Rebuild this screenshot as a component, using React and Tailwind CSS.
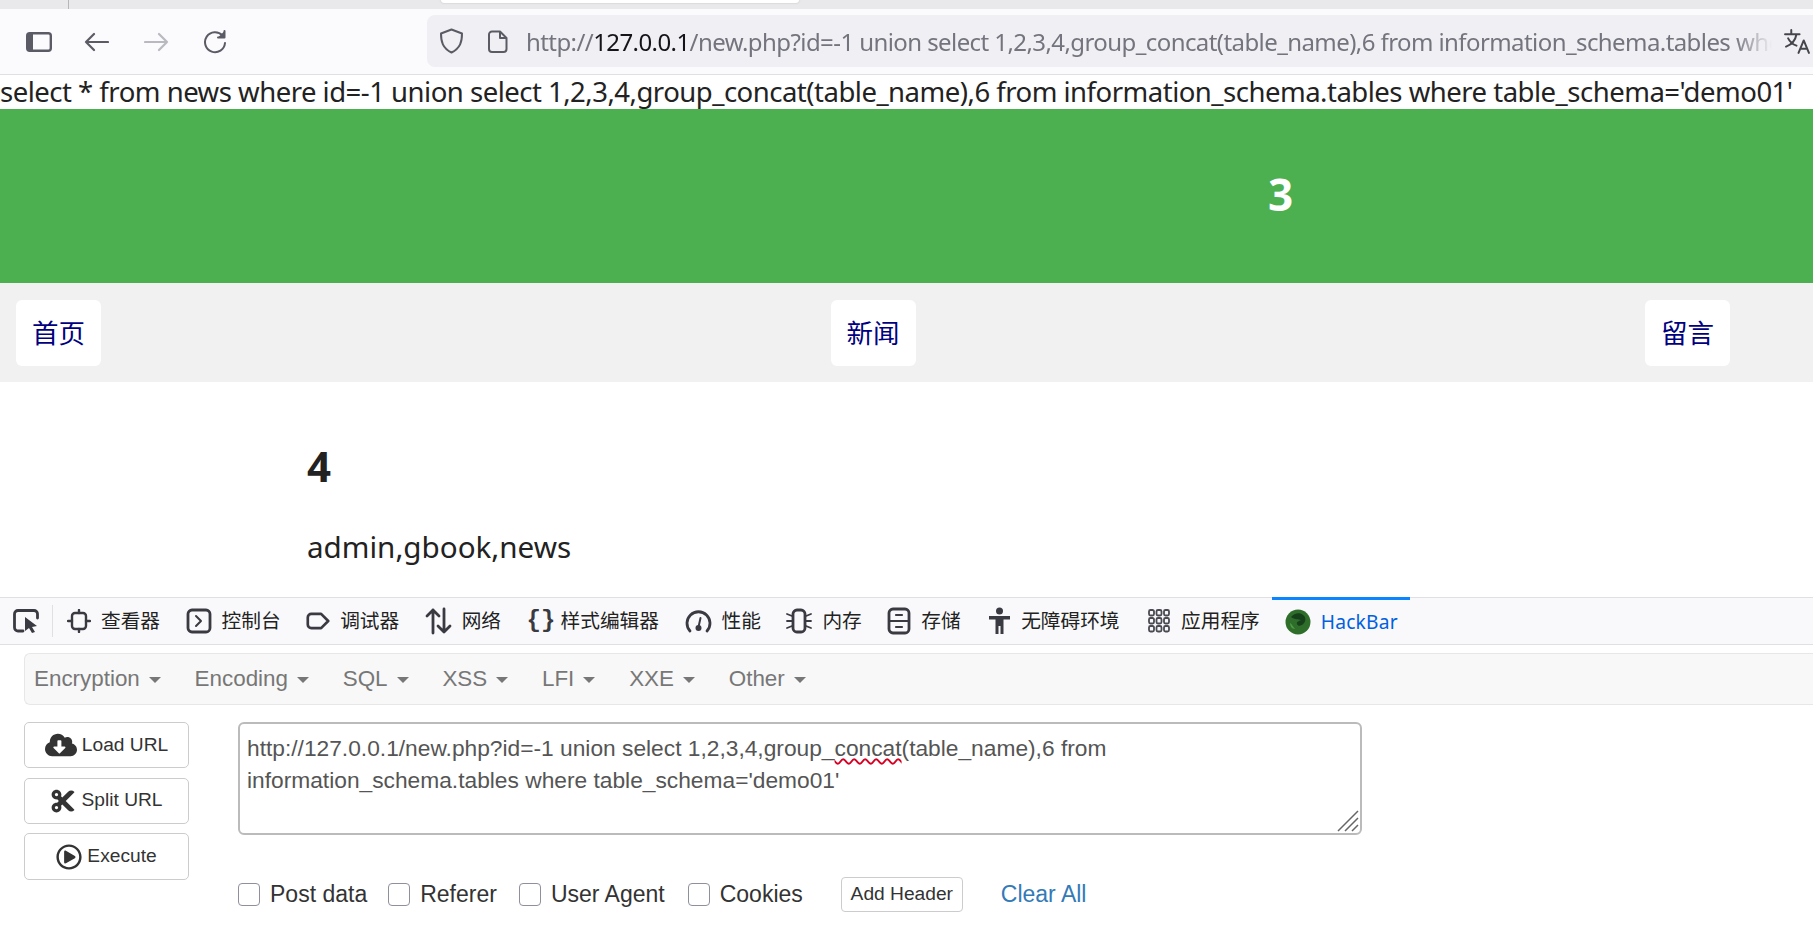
import React from "react";
import { FaCloudDownloadAlt, FaCut, FaRegPlayCircle } from "react-icons/fa";

const Ic = ({ w = 26, h = 26, vb = "0 0 26 26", children, className = "" }) => (
  <svg width={w} height={h} viewBox={vb} fill="none" stroke="#3a3a42" strokeWidth="2.4" strokeLinecap="round" strokeLinejoin="round" className={`shrink-0 ${className}`}>
    {children}
  </svg>
);

const tabs = [
  ["查看器", <Ic w={24} h={24} vb="0 0 24 24"><rect x="5" y="4" width="14" height="16" rx="3" /><path d="M1 12h4M19 12h4M12 1v3M12 20v3" /></Ic>],
  ["控制台", <Ic><rect x="2" y="2" width="22" height="22" rx="4" strokeWidth="2.8" /><path d="M10 8l5 5-5 5" strokeWidth="2" /></Ic>],
  ["调试器", <Ic w={24} h={22} vb="0 0 27 24"><path d="M6 4h11l8 8-8 8H6a4 4 0 0 1-4-4V8a4 4 0 0 1 4-4z" strokeWidth="3" /></Ic>],
  ["网络", <Ic w={27} h={28} vb="0 0 27 28"><path d="M8 26V3M2 9l6-6 6 6M19 2v23M13 19l6 6 6-6" strokeWidth="2.8" /></Ic>],
  ["样式编辑器", <span className="w-[24px] text-center text-[24px] leading-none font-bold text-[#3a3a42] font-['Liberation_Mono',monospace]">{"{}"}</span>],
  ["性能", <Ic w={27} h={26} vb="0 0 27 26"><path d="M5 23A11.5 11.5 0 1 1 22 23" strokeWidth="2.8" /><path d="M13.5 19l2-9" strokeWidth="2" /><circle cx="13.5" cy="20" r="3" fill="#3a3a42" stroke="none" /></Ic>],
  ["内存", <Ic w={26} h={26} vb="0 0 26 26"><rect x="7" y="2" width="12" height="22" rx="4" strokeWidth="2.8" /><path d="M1 6l5 2M1 13h5M1 20l5-2M20 8l5-2M20 13h5M20 18l5 2" strokeWidth="1.8" /></Ic>],
  ["存储", <Ic w={24} h={28} vb="0 0 24 28"><rect x="2" y="2" width="20" height="24" rx="4" strokeWidth="2.8" /><path d="M3 14h18M9 8h6M9 20h6" strokeWidth="2.2" /></Ic>],
  ["无障碍环境", <svg width="23" height="28" viewBox="0 0 23 28" className="shrink-0 ml-[2px]" fill="#3a3a42"><circle cx="11.5" cy="4" r="3.5" /><path d="M1 9h21v3.5h-6.5V27h-3v-8h-2v8h-3V12.500H1z" /></svg>],
  ["应用程序", <svg width="24" height="26" viewBox="0 0 24 26" className="shrink-0 ml-[2px]" fill="none" stroke="#4a4a52" strokeWidth="1.8">{[2, 9.500, 17].map((x) => [2, 10, 18].map((y) => <rect key={`${x}-${y}`} x={x} y={y} width="5" height="5.500" rx="1.500" />))}</svg>],
];

const NavItem = ({ children }) => (
  <div className="flex items-center gap-[9px] text-[22.4px] text-[#777]">
    <span>{children}</span>
    <span className="mt-[3px] w-0 h-0 border-x-[6px] border-x-transparent border-t-[6px] border-t-[#777]" />
  </div>
);

const SideBtn = ({ icon, label, h }) => (
  <button className={`w-[165px] ${h} flex items-center justify-center gap-[5px] border border-[#ccc] rounded-[5px] bg-white text-[19.2px] text-[#333]`}>
    {icon}
    <span>{label}</span>
  </button>
);

const Check = ({ label, cls }) => (
  <label className={`flex items-center gap-[10px] ${cls}`}>
    <span className="w-[22px] h-[23px] border border-[#8f8f9d] rounded-[4px] bg-white" />
    <span>{label}</span>
  </label>
);

export default function App() {
  return (
    <div className="w-[1813px] h-[947px] overflow-hidden bg-white font-['Noto_Sans','Noto_Sans_CJK_SC',sans-serif]">
      {/* tab strip */}
      <div className="h-[9px] bg-[#e9e9ec] flex">
        <div className="ml-[68px] w-px bg-[#b5b5bb]" />
        <div className="ml-[372px] w-[358px] h-[3px] bg-white rounded-b-[3px] shadow-[0_0_2px_#bbb]" />
      </div>

      {/* toolbar */}
      <div className="h-[66px] bg-[#fbfbfd] border-b border-[#e0e0e2] flex items-center">
        <svg width="26" height="20" viewBox="0 0 26 20" className="ml-[26px] shrink-0" fill="none">
          <rect x="1.200" y="1.200" width="23.600" height="17.600" rx="2.500" stroke="#5b5b66" strokeWidth="2.400" />
          <path d="M2 2h5v16H2z" fill="#5b5b66" />
        </svg>
        <svg width="25" height="20" viewBox="0 0 25 20" className="ml-[32px] shrink-0" fill="none" stroke="#5b5b66" strokeWidth="2.200" strokeLinecap="round" strokeLinejoin="round">
          <path d="M24 10H2M10 2l-8 8 8 8" />
        </svg>
        <svg width="25" height="20" viewBox="0 0 25 20" className="ml-[35px] shrink-0" fill="none" stroke="#b9b9c0" strokeWidth="2.200" strokeLinecap="round" strokeLinejoin="round">
          <path d="M1 10h22M15 2l8 8-8 8" />
        </svg>
        <svg width="25" height="24" viewBox="0 0 25 24" className="ml-[33px] shrink-0" fill="none" stroke="#5b5b66" strokeWidth="2" strokeLinecap="round" strokeLinejoin="round">
          <path d="M20.500 5.500A10 10 0 1 0 23 13" />
          <path d="M22.500 1v6.500H16" fill="#5b5b66" />
        </svg>

        <div className="ml-[200px] flex-1 h-[52px] mb-[1px] bg-[#f0f0f4] rounded-l-[8px] flex items-center min-w-0">
          <svg width="25" height="26" viewBox="0 0 25 26" className="ml-[12px] shrink-0" fill="none" stroke="#5b5b66" strokeWidth="2" strokeLinejoin="round">
            <path d="M12.500 1.500l10.500 4c0 8-1.500 14.500-10.500 19C3.500 20 2 13.500 2 5.500z" />
          </svg>
          <svg width="20" height="23" viewBox="0 0 20 23" className="ml-[24px] shrink-0" fill="none" stroke="#5b5b66" strokeWidth="2" strokeLinejoin="round">
            <path d="M4 1.500h8l6.500 6.500v11a3 3 0 0 1-3 3H4a3 3 0 0 1-3-3V4.500a3 3 0 0 1 3-3zM12 1.500V8h6.500" />
          </svg>
          <div className="ml-[18px] pt-[2px] w-[1246px] shrink-0 overflow-hidden whitespace-nowrap text-[24px] tracking-[-0.58px] text-[#74747e] [mask-image:linear-gradient(to_right,black_97%,transparent)]">
            http://<span className="text-[#15141a]">127.0.0.1</span>/new.php?id=-1 union select 1,2,3,4,group_concat(table_name),6 from information_schema.tables where table_schema='demo01'
          </div>
          <svg width="27" height="25" viewBox="0 0 26 24" className="ml-[12px] shrink-0" fill="none" stroke="#45454d" strokeWidth="1.900" strokeLinecap="round" strokeLinejoin="round">
            <path d="M1 5h14M7 1v4M12 5c-1 6-5 10-10 12M4 9c2 4 5 6 8 7M14 23l5-12 5 12M16 19h6" />
          </svg>
        </div>
      </div>

      {/* query */}
      <div className="h-[34px] text-[27.500px] tracking-[-0.5px] leading-[34px] text-[#222] whitespace-nowrap">
        select * from news where id=-1 union select 1,2,3,4,group_concat(table_name),6 from information_schema.tables where table_schema='demo01'
      </div>

      {/* banner */}
      <div className="h-[174px] bg-[#4caf50] flex items-center pl-[1268px] pb-[4px] text-white text-[44px] leading-none font-bold">3</div>

      {/* nav */}
      <div className="h-[99px] bg-[#f1f1f1] flex items-center justify-between pl-[16px] pr-[83px]">
        {["首页", "新闻", "留言"].map((t) => (
          <div key={t} className="h-[66px] w-[85px] bg-white rounded-[6px] flex items-center justify-center pt-[2px] text-[26.500px] text-[#000080]">{t}</div>
        ))}
      </div>

      {/* content */}
      <div className="h-[215px] pl-[307px] pt-[56px] text-[#222]">
        <div className="text-[42px] leading-[56px] font-bold">4</div>
        <div className="mt-[31px] text-[29.600px] leading-[44px]">admin,gbook,news</div>
      </div>

      {/* devtools toolbar */}
      <div className="h-[48px] bg-[#f9f9fb] border-y border-[#e0e0e2] flex items-center text-[19.700px] text-[#222]">
        <svg width="26" height="24" viewBox="0 0 26 24" className="ml-[13px] shrink-0" fill="none">
          <path d="M10 22H5a3.500 3.500 0 0 1-3.500-3.500V5A3.500 3.500 0 0 1 5 1.500h16A3.500 3.500 0 0 1 24.500 5v4" stroke="#3a3a42" strokeWidth="2.800" strokeLinecap="round" />
          <path d="M12 8l12 9-5 1 3 5-3 1-3-5-4 3z" fill="#3a3a42" />
        </svg>
        <div className="ml-[13px] w-px h-[32px] bg-[#e0e0e2]" />
        <div className="ml-[14px] flex items-center gap-[25.500px]">
          {tabs.map(([t, icon]) => (
            <div key={t} className="flex items-center gap-[10px]">
              {icon}
              <span className="whitespace-nowrap">{t}</span>
            </div>
          ))}
        </div>
        <div className="ml-[12px] w-[138px] h-[47px] -mt-px border-t-[3px] border-[#0a84ff] flex items-center gap-[10px] pl-[13px]">
          <svg width="26" height="26" viewBox="0 0 26 26" className="shrink-0">
            <circle cx="13" cy="13" r="12.500" fill="#2f6e2a" />
            <path d="M6 8c3-4 9-5 12-2 3 2 3 6 1 8-2 3-6 4-7 1-1-2 2-3 4-4-3-1-6 0-10-3z" fill="#16401a" />
            <path d="M5 14c2 1 3 4 5 6-3 0-5-3-5-6z" fill="#4f9a45" />
          </svg>
          <span className="text-[#0060df] text-[19.200px] tracking-[0.2px]">HackBar</span>
        </div>
      </div>

      {/* hackbar */}
      <div className="font-['Liberation_Sans',sans-serif]">
        <div className="mt-[8px] ml-[24px] h-[52px] bg-[#f8f8f8] border border-r-0 border-[#e7e7e7] rounded-l-[6px] flex items-center gap-[33.800px] pl-[9px]">
          {["Encryption", "Encoding", "SQL", "XSS", "LFI", "XXE", "Other"].map((t) => (
            <NavItem key={t}>{t}</NavItem>
          ))}
        </div>

        <div className="mt-[17px] ml-[24px] flex">
          <div className="flex flex-col gap-[9.500px]">
            <SideBtn h="h-[46px]" label="Load URL" icon={<FaCloudDownloadAlt className="text-[32px] text-[#333]" />} />
            <SideBtn h="h-[46px]" label="Split URL" icon={<FaCut className="text-[26px] text-[#333]" />} />
            <SideBtn h="h-[47px]" label="Execute" icon={<FaRegPlayCircle className="text-[26px] text-[#333]" />} />
          </div>

          <div className="ml-[49px]">
            <div className="relative w-[1124px] h-[113px] border-2 border-[#bbb] rounded-[6px] pl-[7px] pt-[8px] text-[22.750px] leading-[32px] text-[#555]">
              http://127.0.0.1/new.php?id=-1 union select 1,2,3,4,group_<span className="underline decoration-wavy decoration-[#d70022] decoration-[1.500px] underline-offset-[2px]">concat</span>(table_name),6 from<br />
              information_schema.tables where table_schema='demo01'
              <svg width="22" height="22" viewBox="0 0 22 22" className="absolute right-[1px] bottom-[1px]" stroke="#666" strokeWidth="1.500">
                <path d="M1 21L21 1M8 21L21 8M15 21l6-6" />
              </svg>
            </div>

            <div className="mt-[42px] flex items-center text-[23px] text-[#333]">
              <Check label="Post data" cls="mr-[21px]" />
              <Check label="Referer" cls="mr-[22px]" />
              <Check label="User Agent" cls="mr-[23px]" />
              <Check label="Cookies" cls="mr-[38px]" />
              <button className="h-[35px] w-[122px] border border-[#ccc] rounded-[4px] bg-white text-[19.200px] text-[#333]">Add Header</button>
              <span className="ml-[38px] text-[#337ab7]">Clear All</span>
            </div>
          </div>
        </div>
      </div>
    </div>
  );
}
